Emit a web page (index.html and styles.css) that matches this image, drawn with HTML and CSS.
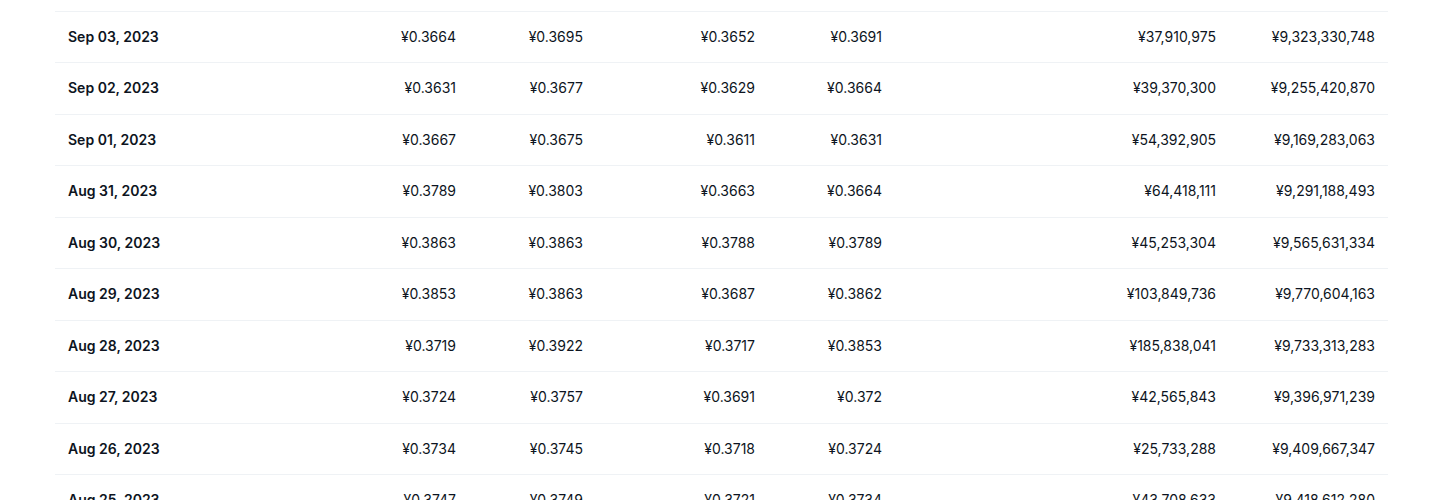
FILE: index.html
```html
<!DOCTYPE html>
<html>
<head>
<meta charset="utf-8">
<link rel="stylesheet" href="styles.css">
</head>
<body>
<div class="wrap">
<table class="hist">
<colgroup>
<col class="c1"><col class="c2"><col class="c3"><col class="c4"><col class="c5"><col class="c6"><col class="c7">
</colgroup>
<tbody>
<tr><td class="date">Sep 03, 2023</td><td>¥0.3664</td><td>¥0.3695</td><td>¥0.3652</td><td>¥0.3691</td><td>¥37,910,975</td><td>¥9,323,330,748</td></tr>
<tr><td class="date">Sep 02, 2023</td><td>¥0.3631</td><td>¥0.3677</td><td>¥0.3629</td><td>¥0.3664</td><td>¥39,370,300</td><td>¥9,255,420,870</td></tr>
<tr><td class="date">Sep 01, 2023</td><td>¥0.3667</td><td>¥0.3675</td><td>¥0.3611</td><td>¥0.3631</td><td>¥54,392,905</td><td>¥9,169,283,063</td></tr>
<tr><td class="date">Aug 31, 2023</td><td>¥0.3789</td><td>¥0.3803</td><td>¥0.3663</td><td>¥0.3664</td><td>¥64,418,111</td><td>¥9,291,188,493</td></tr>
<tr><td class="date">Aug 30, 2023</td><td>¥0.3863</td><td>¥0.3863</td><td>¥0.3788</td><td>¥0.3789</td><td>¥45,253,304</td><td>¥9,565,631,334</td></tr>
<tr><td class="date">Aug 29, 2023</td><td>¥0.3853</td><td>¥0.3863</td><td>¥0.3687</td><td>¥0.3862</td><td>¥103,849,736</td><td>¥9,770,604,163</td></tr>
<tr><td class="date">Aug 28, 2023</td><td>¥0.3719</td><td>¥0.3922</td><td>¥0.3717</td><td>¥0.3853</td><td>¥185,838,041</td><td>¥9,733,313,283</td></tr>
<tr><td class="date">Aug 27, 2023</td><td>¥0.3724</td><td>¥0.3757</td><td>¥0.3691</td><td>¥0.372</td><td>¥42,565,843</td><td>¥9,396,971,239</td></tr>
<tr><td class="date">Aug 26, 2023</td><td>¥0.3734</td><td>¥0.3745</td><td>¥0.3718</td><td>¥0.3724</td><td>¥25,733,288</td><td>¥9,409,667,347</td></tr>
<tr><td class="date">Aug 25, 2023</td><td>¥0.3747</td><td>¥0.3749</td><td>¥0.3721</td><td>¥0.3734</td><td>¥43,708,633</td><td>¥9,418,612,280</td></tr>
</tbody>
</table>
</div>
</body>
</html>
```
FILE: styles.css
```css
html, body {
  margin: 0;
  padding: 0;
  background: #ffffff;
  overflow: hidden;
}
body {
  font-family: Inter, "Noto Sans", sans-serif;
  color: #0d1421;
}
.wrap {
  padding: 11px 0 0 55px;
}
.hist {
  width: 1333px;
  table-layout: fixed;
  border-collapse: collapse;
  border-top: 1px solid #eff2f5;
}
.c1 { width: 207px; }
.c2 { width: 207px; }
.c3 { width: 127px; }
.c4 { width: 172px; }
.c5 { width: 127px; }
.c6 { width: 334px; }
.c7 { width: 159px; }
.hist td {
  padding: 16px 13px;
  font-size: 14px;
  line-height: 18.44px;
  text-align: right;
  white-space: nowrap;
  border-bottom: 1px solid #eff2f5;
  font-weight: 400;
}
.hist td.date {
  text-align: left;
  font-weight: 600;
}
```
